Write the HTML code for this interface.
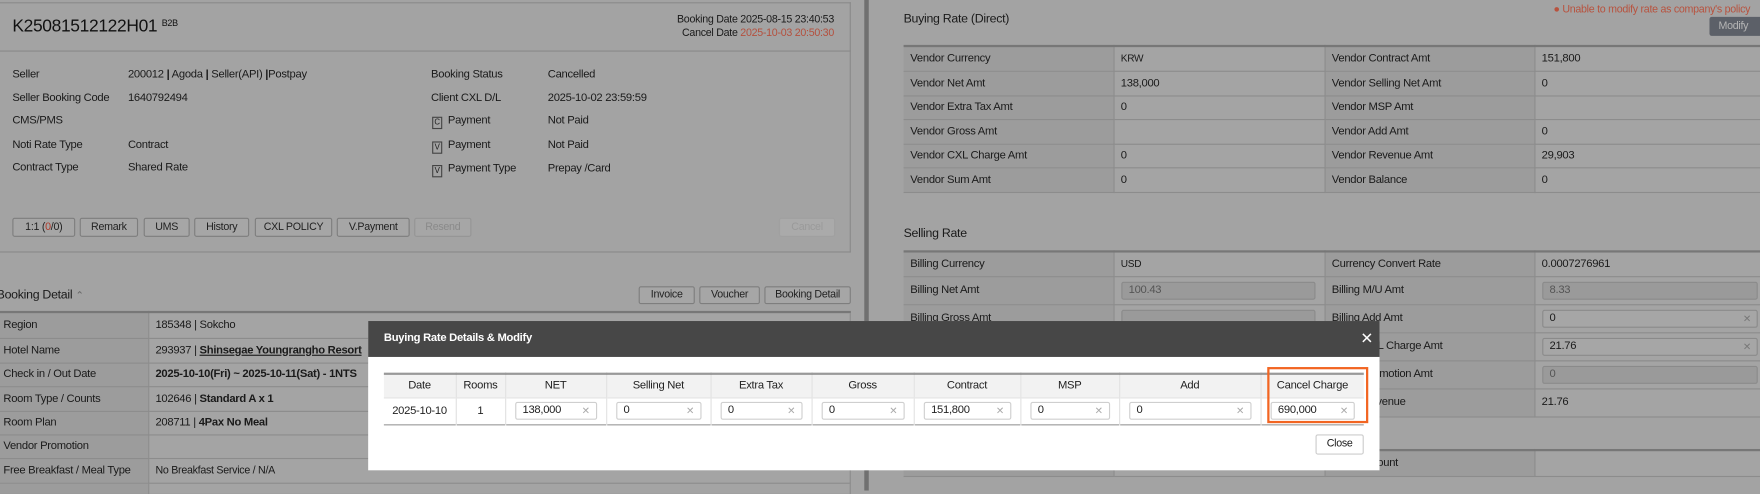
<!DOCTYPE html>
<html><head><meta charset="utf-8"><style>
*{margin:0;padding:0;box-sizing:border-box}
html,body{width:1760px;height:490px;overflow:hidden;background:#a3a3a3}
body{font-family:"Liberation Sans",Arial,sans-serif;color:#1a1a1a}
#w{position:absolute;left:0;top:0;width:1568px;height:437px;transform:scale(1.12245);transform-origin:0 0;font-size:10px;letter-spacing:-0.25px}
.a{position:absolute;white-space:nowrap}
.btn{position:absolute;border:1px solid #7e7e7e;background:#a6a6a6;border-radius:2px;text-align:center;font-size:9.5px;color:#222}
.ic{display:inline-block;width:9px;height:11px;border:1px solid #444;font-size:7px;line-height:9px;text-align:center;margin-right:5px;vertical-align:-1px;letter-spacing:0}
table{border-collapse:collapse;position:absolute;table-layout:fixed}
.rt td{border-bottom:1px solid #8c8c8c;border-right:1px solid #8c8c8c;padding-left:6px;font-size:10px;white-space:nowrap;overflow:hidden}
.rt td.l{background:#9c9c9c}
.rt td.v{background:#a4a4a4}
.inp{position:relative;display:block;height:16px;border:1px solid #8a8a8a;border-radius:2px;padding-left:6px;line-height:14px}
.dis{background:#9a9a9a;color:#555}
.en{background:#a6a6a6}
.x{position:absolute;right:5px;top:0;color:#777;font-size:9px}
.mt td{border-right:1px solid #e2e2e2;text-align:center;font-size:10px;color:#222;padding:0 6px}
.mt td:last-child{border-right:none}
.mi{display:block;height:16px;border:1px solid #cfcfcf;border-radius:2px;text-align:left;padding-left:6px;line-height:14px;position:relative;background:#fff}
.mi .x{color:#aaa}
</style></head><body><div id="w">

<!-- left top panel -->
<div class="a" style="left:0;top:2px;width:758px;height:223px;border:1px solid #8a8a8a;border-left:none"></div>
<div class="a" style="left:0;top:45px;width:758px;height:1px;background:#8a8a8a"></div>
<div class="a" style="left:11px;top:15px;font-size:15.5px;letter-spacing:-0.3px;color:#111">K25081512122H01 <span style="font-size:8px;vertical-align:5px">B2B</span></div>
<div class="a" style="right:825px;top:12px;font-size:9.5px;text-align:right;line-height:12px">Booking Date 2025-08-15 23:40:53<br>Cancel Date <span style="color:#b4503e">2025-10-03 20:50:30</span></div>

<div class="a" style="left:11px;top:61px">Seller</div><div class="a" style="left:114px;top:61px">200012 <b>|</b> Agoda <b>|</b> Seller(API) <b>|</b>Postpay</div>
<div class="a" style="left:11px;top:82px">Seller Booking Code</div><div class="a" style="left:114px;top:82px">1640792494</div>
<div class="a" style="left:11px;top:102px">CMS/PMS</div>
<div class="a" style="left:11px;top:124px">Noti Rate Type</div><div class="a" style="left:114px;top:124px">Contract</div>
<div class="a" style="left:11px;top:144px">Contract Type</div><div class="a" style="left:114px;top:144px">Shared Rate</div>

<div class="a" style="left:384px;top:61px">Booking Status</div><div class="a" style="left:488px;top:61px">Cancelled</div>
<div class="a" style="left:384px;top:82px">Client CXL D/L</div><div class="a" style="left:488px;top:82px">2025-10-02 23:59:59</div>
<div class="a" style="left:385px;top:102px"><span class="ic">C</span>Payment</div><div class="a" style="left:488px;top:102px">Not Paid</div>
<div class="a" style="left:385px;top:124px"><span class="ic">V</span>Payment</div><div class="a" style="left:488px;top:124px">Not Paid</div>
<div class="a" style="left:385px;top:145px"><span class="ic">V</span>Payment Type</div><div class="a" style="left:488px;top:145px">Prepay /Card</div>

<div class="btn" style="left:11px;top:194px;width:56px;height:17px;line-height:15px">1:1 (<span style="color:#b03a2a">0</span>/0)</div>
<div class="btn" style="left:71px;top:194px;width:52px;height:17px;line-height:15px">Remark</div>
<div class="btn" style="left:128px;top:194px;width:41px;height:17px;line-height:15px">UMS</div>
<div class="btn" style="left:173px;top:194px;width:49px;height:17px;line-height:15px">History</div>
<div class="btn" style="left:227px;top:194px;width:69px;height:17px;line-height:15px">CXL POLICY</div>
<div class="btn" style="left:300px;top:194px;width:65px;height:17px;line-height:15px">V.Payment</div>
<div class="btn" style="left:369px;top:194px;width:51px;height:17px;line-height:15px;color:#8a8a8a;border-color:#959595">Resend</div>
<div class="btn" style="left:694px;top:194px;width:50px;height:17px;line-height:15px;color:#9a9a9a;background:#aaaaaa;border-color:#a0a0a0">Cancel</div>

<!-- divider -->
<div class="a" style="left:770px;top:0;width:4px;height:437px;background:#707070"></div>

<!-- booking detail -->
<div class="a" style="left:-3px;top:257px;font-size:11px">Booking Detail <span style="color:#666;font-size:9px">&#8963;</span></div>
<div class="btn" style="left:569px;top:255px;width:50px;height:16px;line-height:14px">Invoice</div>
<div class="btn" style="left:623px;top:255px;width:54px;height:16px;line-height:14px">Voucher</div>
<div class="btn" style="left:681px;top:255px;width:77px;height:16px;line-height:14px">Booking Detail</div>
<table class="rt" style="left:0;top:277px;width:758px;border-top:2px solid #777">
<colgroup><col style="width:132px"><col></colgroup>
<tr style="height:23px"><td class="l" style="padding-left:3px">Region</td><td class="v">185348 | Sokcho</td></tr>
<tr style="height:22px"><td class="l" style="padding-left:3px">Hotel Name</td><td class="v">293937 | <b style="text-decoration:underline">Shinsegae Youngrangho Resort</b></td></tr>
<tr style="height:21px"><td class="l" style="padding-left:3px">Check in / Out Date</td><td class="v"><b>2025-10-10(Fri) ~ 2025-10-11(Sat) - 1NTS</b></td></tr>
<tr style="height:22px"><td class="l" style="padding-left:3px">Room Type / Counts</td><td class="v">102646 | <b>Standard A x 1</b></td></tr>
<tr style="height:21px"><td class="l" style="padding-left:3px">Room Plan</td><td class="v">208711 | <b>4Pax No Meal</b></td></tr>
<tr style="height:21px"><td class="l" style="padding-left:3px">Vendor Promotion</td><td class="v"></td></tr>
<tr style="height:22px"><td class="l" style="padding-left:3px">Free Breakfast / Meal Type</td><td class="v" style="font-size:9.5px">No Breakfast Service / N/A</td></tr>
<tr style="height:10px"><td class="l"></td><td class="v"></td></tr>
</table>

<!-- right buying -->
<div class="a" style="left:805px;top:11px;font-size:11px">Buying Rate (Direct)</div>
<div class="a" style="left:1384px;top:3px;font-size:9.5px;color:#b8523e">&#9679; Unable to modify rate as company's policy</div>
<div class="a" style="left:1523px;top:15px;width:50px;height:17px;background:#5c6068;border-radius:2px;color:#b5b5b5;font-size:9.5px;line-height:17px;padding-left:8px">Modify</div>
<table class="rt" style="left:805px;top:40px;width:770px;border-top:2px solid #777">
<colgroup><col style="width:187px"><col style="width:188px"><col style="width:187px"><col></colgroup>
<tr style="height:22px"><td class="l">Vendor Currency</td><td class="v" style="font-size:9px">KRW</td><td class="l">Vendor Contract Amt</td><td class="v">151,800</td></tr>
<tr style="height:22px"><td class="l">Vendor Net Amt</td><td class="v">138,000</td><td class="l">Vendor Selling Net Amt</td><td class="v">0</td></tr>
<tr style="height:21px"><td class="l">Vendor Extra Tax Amt</td><td class="v">0</td><td class="l">Vendor MSP Amt</td><td class="v"></td></tr>
<tr style="height:22px"><td class="l">Vendor Gross Amt</td><td class="v"></td><td class="l">Vendor Add Amt</td><td class="v">0</td></tr>
<tr style="height:21px"><td class="l">Vendor CXL Charge Amt</td><td class="v">0</td><td class="l">Vendor Revenue Amt</td><td class="v">29,903</td></tr>
<tr style="height:22px"><td class="l">Vendor Sum Amt</td><td class="v">0</td><td class="l">Vendor Balance</td><td class="v">0</td></tr>
</table>

<div class="a" style="left:805px;top:202px;font-size:11px">Selling Rate</div>
<table class="rt" style="left:805px;top:223px;width:770px;border-top:2px solid #777">
<colgroup><col style="width:187px"><col style="width:188px"><col style="width:187px"><col></colgroup>
<tr style="height:22px"><td class="l">Billing Currency</td><td class="v" style="font-size:9px">USD</td><td class="l">Currency Convert Rate</td><td class="v">0.0007276961</td></tr>
<tr style="height:25px"><td class="l">Billing Net Amt</td><td class="v" style="padding-right:8px"><span class="inp dis">100.43</span></td><td class="l">Billing M/U Amt</td><td class="v" style="padding-right:8px"><span class="inp dis">8.33</span></td></tr>
<tr style="height:25px"><td class="l">Billing Gross Amt</td><td class="v" style="padding-right:8px"><span class="inp dis"></span></td><td class="l">Billing Add Amt</td><td class="v" style="padding-right:8px"><span class="inp en">0<span class="x">✕</span></span></td></tr>
<tr style="height:25px"><td class="l">Billing CXL Amt</td><td class="v"></td><td class="l">Billing CXL Charge Amt</td><td class="v" style="padding-right:8px"><span class="inp en">21.76<span class="x">✕</span></span></td></tr>
<tr style="height:25px"><td class="l">Billing Sum Amt</td><td class="v"></td><td class="l">Billing Promotion Amt</td><td class="v" style="padding-right:8px"><span class="inp dis">0</span></td></tr>
<tr style="height:25px"><td class="l">Billing Balance</td><td class="v"></td><td class="l">Billing Revenue</td><td class="v">21.76</td></tr>
</table>
<table class="rt" style="left:805px;top:400px;width:770px;border-top:2px solid #777">
<colgroup><col style="width:187px"><col style="width:188px"><col style="width:187px"><col></colgroup>
<tr style="height:23px"><td class="l">Billing Amount</td><td class="v"></td><td class="l">Settle Amount</td><td class="v"></td></tr>
</table>

<!-- modal -->
<div class="a" style="left:328px;top:286px;width:901px;height:133px;background:#fff"></div>
<div class="a" style="left:328px;top:286px;width:901px;height:32px;background:#474747"></div>
<div class="a" style="left:342px;top:296px;color:#fff;font-weight:bold;font-size:10px">Buying Rate Details &amp; Modify</div>
<div class="a" style="left:1212px;top:293px;color:#fff;font-size:14px">✕</div>
<table class="mt" style="left:342px;top:332px;width:873px;border-top:2px solid #999;border-bottom:1px solid #999">
<colgroup><col style="width:64px"><col style="width:44px"><col style="width:90px"><col style="width:93px"><col style="width:90px"><col style="width:91px"><col style="width:95px"><col style="width:88px"><col style="width:126px"><col></colgroup>
<tr style="height:21px;background:#f2f2f2;border-bottom:1px solid #e2e2e2"><td>Date</td><td>Rooms</td><td>NET</td><td>Selling Net</td><td>Extra Tax</td><td>Gross</td><td>Contract</td><td>MSP</td><td>Add</td><td>Cancel Charge</td></tr>
<tr style="height:24px"><td>2025-10-10</td><td>1</td>
<td style="padding:0 8px"><span class="mi">138,000<span class="x">✕</span></span></td>
<td style="padding:0 8px"><span class="mi">0<span class="x">✕</span></span></td>
<td style="padding:0 8px"><span class="mi">0<span class="x">✕</span></span></td>
<td style="padding:0 8px"><span class="mi">0<span class="x">✕</span></span></td>
<td style="padding:0 8px"><span class="mi">151,800<span class="x">✕</span></span></td>
<td style="padding:0 8px"><span class="mi">0<span class="x">✕</span></span></td>
<td style="padding:0 8px"><span class="mi">0<span class="x">✕</span></span></td>
<td style="padding:0 8px"><span class="mi">690,000<span class="x">✕</span></span></td></tr>
</table>
<div class="a" style="left:1129px;top:327px;width:90px;height:50px;border:2px solid #f26522"></div>
<div class="a" style="left:1172px;top:387px;width:43px;height:18px;border:1px solid #ccc;border-radius:2px;background:#fff;text-align:center;line-height:16px;font-size:9.5px">Close</div>

</div></body></html>
